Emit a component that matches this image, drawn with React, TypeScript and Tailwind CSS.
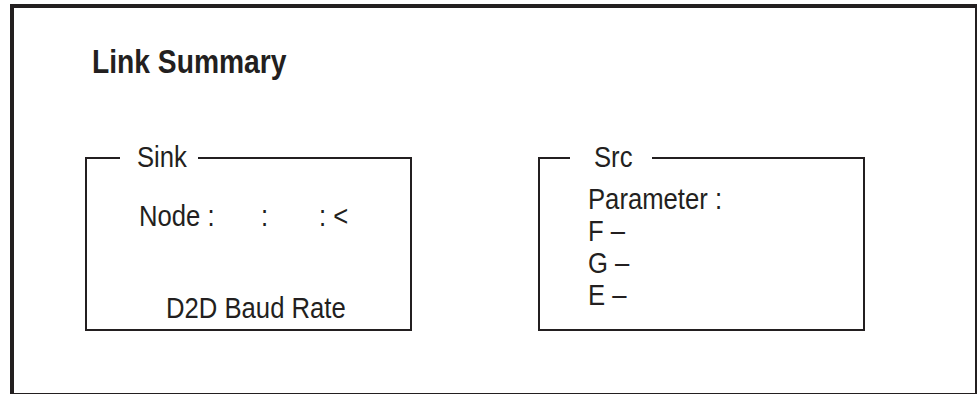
import React from "react";

const font = "font-['Liberation_Sans','Arial',sans-serif]";

const params = ["Parameter :", "F –", "G –", "E –"];

// the screenshot uses a condensed face; squeeze Liberation Sans horizontally
const Narrow: React.FC<{ children: React.ReactNode; className?: string }> = ({ children, className = "" }) => (
  <span className={`inline-block origin-left scale-x-[0.885] whitespace-pre ${className}`}>{children}</span>
);

const App: React.FC = () => {
  return (
    <div className={`w-[977px] h-[394px] overflow-hidden bg-white text-[#231f20] ${font}`}>
      <div className="ml-[10px] mt-[4px] w-[967px] h-[391px] border-l-4 border-t-4 border-r-2 border-b-2 border-[#231f20] pl-[78px] pt-[36px]">
        <h1 className="text-[34px] leading-[34px] font-bold">
          <span className="inline-block origin-left scale-x-[0.83] whitespace-pre">Link Summary</span>
        </h1>

        <div className="flex gap-[126px] mt-[65px] -ml-[7px] text-[29px] leading-[29px]">
          {/* Sink */}
          <fieldset className="w-[327px] h-[188px] border-2 border-[#231f20] flex flex-col">
            <legend className="ml-[33px] w-[78px] pl-[17px]">
              <Narrow>Sink</Narrow>
            </legend>
            <div className="mt-[30px] pl-[52px] flex">
              <span className="w-[122px]"><Narrow>Node :</Narrow></span>
              <span className="w-[58px]"><Narrow>:</Narrow></span>
              <span><Narrow>: &lt;</Narrow></span>
            </div>
            <div className="mt-[63px] pl-[79px]">
              <Narrow>D2D Baud Rate</Narrow>
            </div>
          </fieldset>

          {/* Src */}
          <fieldset className="w-[327px] h-[188px] border-2 border-[#231f20]">
            <legend className="ml-[30px] w-[82px] pl-[24px]">
              <Narrow>Src</Narrow>
            </legend>
            <div className="mt-[11px] pl-[48px] leading-[32px]">
              {params.map((p) => (
                <div key={p}>
                  <Narrow>{p}</Narrow>
                </div>
              ))}
            </div>
          </fieldset>
        </div>
      </div>
    </div>
  );
};

export default App;
